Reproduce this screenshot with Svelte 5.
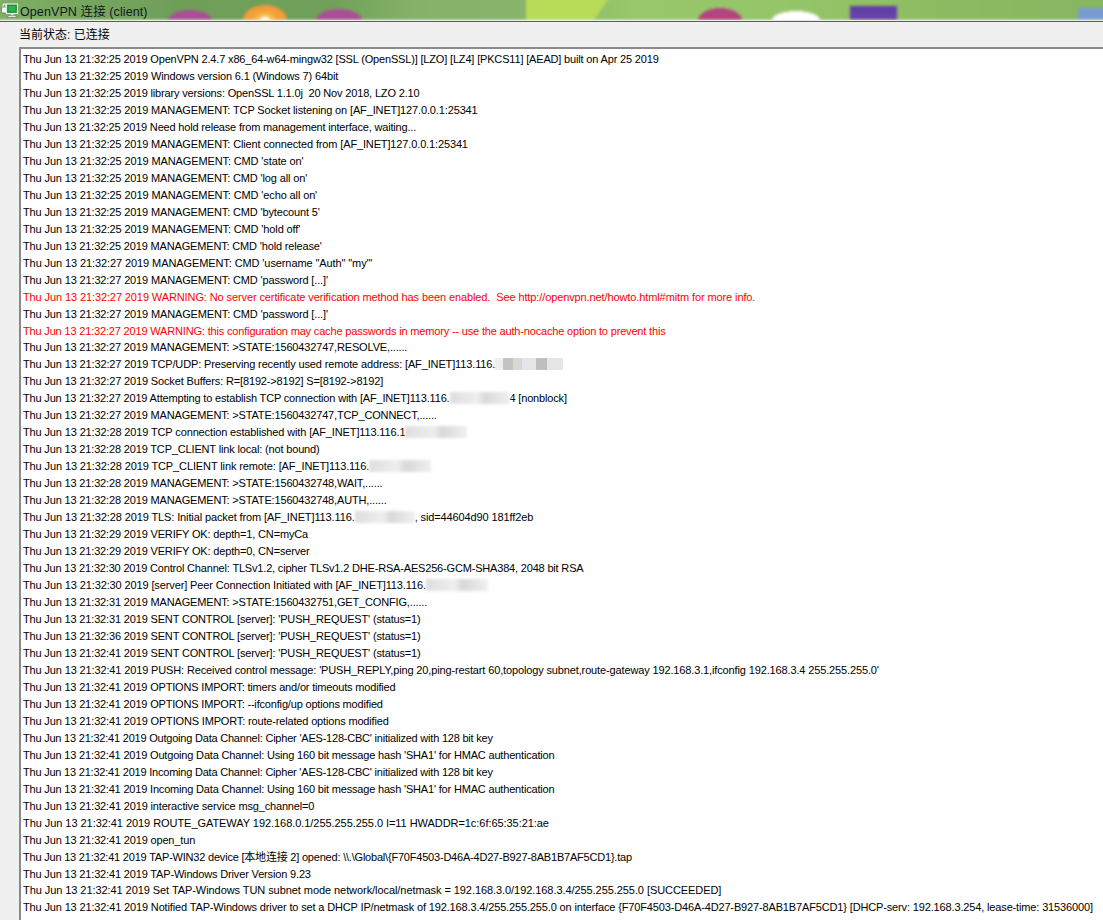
<script>
  const lines = [
    { t: "Thu Jun 13 21:32:25 2019 OpenVPN 2.4.7 x86_64-w64-mingw32 [SSL (OpenSSL)] [LZO] [LZ4] [PKCS11] [AEAD] built on Apr 25 2019", d: -1 },
    { t: "Thu Jun 13 21:32:25 2019 Windows version 6.1 (Windows 7) 64bit", d: 1 },
    { t: "Thu Jun 13 21:32:25 2019 library versions: OpenSSL 1.1.0j  20 Nov 2018, LZO 2.10" },
    { t: "Thu Jun 13 21:32:25 2019 MANAGEMENT: TCP Socket listening on [AF_INET]127.0.0.1:25341", d: 2 },
    { t: "Thu Jun 13 21:32:25 2019 Need hold release from management interface, waiting...", d: -2 },
    { t: "Thu Jun 13 21:32:25 2019 MANAGEMENT: Client connected from [AF_INET]127.0.0.1:25341", d: 2 },
    { t: "Thu Jun 13 21:32:25 2019 MANAGEMENT: CMD 'state on'", d: 2 },
    { t: "Thu Jun 13 21:32:25 2019 MANAGEMENT: CMD 'log all on'", d: 1 },
    { t: "Thu Jun 13 21:32:25 2019 MANAGEMENT: CMD 'echo all on'", d: 2 },
    { t: "Thu Jun 13 21:32:25 2019 MANAGEMENT: CMD 'bytecount 5'", d: 1 },
    { t: "Thu Jun 13 21:32:25 2019 MANAGEMENT: CMD 'hold off'", d: 2 },
    { t: "Thu Jun 13 21:32:25 2019 MANAGEMENT: CMD 'hold release'" },
    { t: "Thu Jun 13 21:32:27 2019 MANAGEMENT: CMD 'username \"Auth\" \"my\"'", d: 4 },
    { t: "Thu Jun 13 21:32:27 2019 MANAGEMENT: CMD 'password [...]'", d: 1 },
    { t: "Thu Jun 13 21:32:27 2019 WARNING: No server certificate verification method has been enabled.  See http://openvpn.net/howto.html#mitm for more info.", red: true, d: 8 },
    { t: "Thu Jun 13 21:32:27 2019 MANAGEMENT: CMD 'password [...]'", d: 1 },
    { t: "Thu Jun 13 21:32:27 2019 WARNING: this configuration may cache passwords in memory -- use the auth-nocache option to prevent this", red: true, d: -1 },
    { t: "Thu Jun 13 21:32:27 2019 MANAGEMENT: >STATE:1560432747,RESOLVE,......" },
    { t: "Thu Jun 13 21:32:27 2019 TCP/UDP: Preserving recently used remote address: [AF_INET]113.116.", mask: 68, kind: "mosaic", d: 2 },
    { t: "Thu Jun 13 21:32:27 2019 Socket Buffers: R=[8192->8192] S=[8192->8192]", d: 1 },
    { t: "Thu Jun 13 21:32:27 2019 Attempting to establish TCP connection with [AF_INET]113.116.", mask: 60, kind: "smear", post: "4 [nonblock]", d: -1 },
    { t: "Thu Jun 13 21:32:27 2019 MANAGEMENT: >STATE:1560432747,TCP_CONNECT,......" },
    { t: "Thu Jun 13 21:32:28 2019 TCP connection established with [AF_INET]113.116.1", mask: 62, kind: "smear", d: 2 },
    { t: "Thu Jun 13 21:32:28 2019 TCP_CLIENT link local: (not bound)" },
    { t: "Thu Jun 13 21:32:28 2019 TCP_CLIENT link remote: [AF_INET]113.116.", mask: 62, kind: "smear", d: 3 },
    { t: "Thu Jun 13 21:32:28 2019 MANAGEMENT: >STATE:1560432748,WAIT,......" },
    { t: "Thu Jun 13 21:32:28 2019 MANAGEMENT: >STATE:1560432748,AUTH,......" },
    { t: "Thu Jun 13 21:32:28 2019 TLS: Initial packet from [AF_INET]113.116.", mask: 60, kind: "smear", post: ", sid=44604d90 181ff2eb", d: 3 },
    { t: "Thu Jun 13 21:32:29 2019 VERIFY OK: depth=1, CN=myCa" },
    { t: "Thu Jun 13 21:32:29 2019 VERIFY OK: depth=0, CN=server" },
    { t: "Thu Jun 13 21:32:30 2019 Control Channel: TLSv1.2, cipher TLSv1.2 DHE-RSA-AES256-GCM-SHA384, 2048 bit RSA", d: -2 },
    { t: "Thu Jun 13 21:32:30 2019 [server] Peer Connection Initiated with [AF_INET]113.116.", mask: 62, kind: "smear", d: 3 },
    { t: "Thu Jun 13 21:32:31 2019 MANAGEMENT: >STATE:1560432751,GET_CONFIG,......" },
    { t: "Thu Jun 13 21:32:31 2019 SENT CONTROL [server]: 'PUSH_REQUEST' (status=1)" },
    { t: "Thu Jun 13 21:32:36 2019 SENT CONTROL [server]: 'PUSH_REQUEST' (status=1)" },
    { t: "Thu Jun 13 21:32:41 2019 SENT CONTROL [server]: 'PUSH_REQUEST' (status=1)" },
    { t: "Thu Jun 13 21:32:41 2019 PUSH: Received control message: 'PUSH_REPLY,ping 20,ping-restart 60,topology subnet,route-gateway 192.168.3.1,ifconfig 192.168.3.4 255.255.255.0'", d: 4 },
    { t: "Thu Jun 13 21:32:41 2019 OPTIONS IMPORT: timers and/or timeouts modified", d: -1 },
    { t: "Thu Jun 13 21:32:41 2019 OPTIONS IMPORT: --ifconfig/up options modified", d: -1 },
    { t: "Thu Jun 13 21:32:41 2019 OPTIONS IMPORT: route-related options modified" },
    { t: "Thu Jun 13 21:32:41 2019 Outgoing Data Channel: Cipher 'AES-128-CBC' initialized with 128 bit key", d: -5 },
    { t: "Thu Jun 13 21:32:41 2019 Outgoing Data Channel: Using 160 bit message hash 'SHA1' for HMAC authentication", d: -2 },
    { t: "Thu Jun 13 21:32:41 2019 Incoming Data Channel: Cipher 'AES-128-CBC' initialized with 128 bit key", d: -5 },
    { t: "Thu Jun 13 21:32:41 2019 Incoming Data Channel: Using 160 bit message hash 'SHA1' for HMAC authentication", d: -2 },
    { t: "Thu Jun 13 21:32:41 2019 interactive service msg_channel=0" },
    { t: "Thu Jun 13 21:32:41 2019 ROUTE_GATEWAY 192.168.0.1/255.255.255.0 I=11 HWADDR=1c:6f:65:35:21:ae", d: 10 },
    { t: "Thu Jun 13 21:32:41 2019 open_tun" },
    { t: "Thu Jun 13 21:32:41 2019 TAP-WIN32 device [本地连接 2] opened: \\\\.\\Global\\{F70F4503-D46A-4D27-B927-8AB1B7AF5CD1}.tap", d: -5 },
    { t: "Thu Jun 13 21:32:41 2019 TAP-Windows Driver Version 9.23" },
    { t: "Thu Jun 13 21:32:41 2019 Set TAP-Windows TUN subnet mode network/local/netmask = 192.168.3.0/192.168.3.4/255.255.255.0 [SUCCEEDED]", d: 12 },
    { t: "Thu Jun 13 21:32:41 2019 Notified TAP-Windows driver to set a DHCP IP/netmask of 192.168.3.4/255.255.255.0 on interface {F70F4503-D46A-4D27-B927-8AB1B7AF5CD1} [DHCP-serv: 192.168.3.254, lease-time: 31536000]", d: 3 }
  ];

  const spacing = (line) => (-0.16 + (line.d ?? 0) / line.t.length).toFixed(3);
</script>

<div class="window">
  <header class="titlebar">
    <svg class="icon" width="18" height="17" viewBox="0 0 18 17" aria-hidden="true">
      <rect x="0.5" y="5" width="6" height="6" rx="1" fill="#f4f4f4" stroke="#555" stroke-width="0.6" />
      <path d="M2 5V3.4a1.5 1.5 0 0 1 3 0V5" fill="none" stroke="#eee" stroke-width="1.2" />
      <rect x="5.5" y="2" width="11" height="9.5" fill="#1f8f3a" stroke="#e4ece4" stroke-width="1.2" />
      <rect x="7.5" y="4" width="7" height="5.5" fill="#2fb14f" />
      <rect x="10" y="11.5" width="2.5" height="2" fill="#e6e6e6" />
      <rect x="7" y="13.5" width="8" height="1.6" fill="#f2f2f2" stroke="#555" stroke-width="0.4" />
    </svg>
    <span class="title">OpenVPN 连接 (client)</span>
  </header>

  <main class="body">
    <div class="status">当前状态: 已连接</div>
    <div class="log">
      {#each lines as line}
        <div class="line" class:red={line.red} style="letter-spacing:{spacing(line)}px">{line.t}{#if line.mask}<span class="mask {line.kind}" style="width:{line.mask}px"></span>{/if}{#if line.post}{line.post}{/if}</div>
      {/each}
    </div>
  </main>
</div>

<style>
  :global(body) {
    margin: 0;
    background: #f0f0f0;
  }
  .window {
    width: 1103px;
    height: 920px;
    overflow: hidden;
    display: flex;
    flex-direction: column;
    font-family: "Liberation Sans", "Noto Sans CJK SC", sans-serif;
    font-size: 11px;
    color: #000;
  }
  .titlebar {
    flex: none;
    position: relative;
    overflow: hidden;
    height: 20px;
    display: flex;
    align-items: center;
    gap: 1px;
    padding-left: 1px;
    border-bottom: 1px solid #e6efdc;
    box-shadow: 0 1px 0 #5c5c5c;
  }
  .titlebar::before {
    content: "";
    position: absolute;
    inset: -4px -4px 0 -4px;
    filter: blur(1.5px);
    background-color: #84b268;
    background-image:
      radial-gradient(ellipse 22px 15px at 269px 24px, #fff 0 14%, #f6c04a 30%, #f2a03a 60%, #f09a38 98%, transparent 100%),
      radial-gradient(ellipse 22px 10px at 194px 24px, #a94f96 0 98%, transparent 100%),
      radial-gradient(ellipse 23px 11px at 343px 24px, #a94f96 0 98%, transparent 100%),
      radial-gradient(ellipse 22px 12px at 724px 24px, #b2447f 0 98%, transparent 100%),
      radial-gradient(ellipse 24px 9px at 800px 24px, #fff 0 98%, transparent 100%),
      linear-gradient(#5f3aa4, #6a48ae),
      linear-gradient(#7a9bd2, #7a9bd2),
      linear-gradient(125deg, #b8dc58 0 72%, transparent 73%),
      linear-gradient(90deg, #7fae64 0, #6e9e58 180px, #6f9f58 330px, #84b268 420px, #86b46a 528px, #98c86a 640px, #94c468 800px, #8cba62 960px, #86b660 1085px);
    background-size: 100% 100%, 100% 100%, 100% 100%, 100% 100%, 100% 100%, 47px 16px, 40px 15px, 100px 100%, 100% 100%;
    background-position: 0 0, 0 0, 0 0, 0 0, 0 0, 854px 10px, 1082px 12px, 530px 0, 0 0;
    background-repeat: no-repeat;
  }
  .icon {
    flex: none;
    position: relative;
  }
  .title {
    position: relative;
    font-size: 12.5px;
    letter-spacing: 0.1px;
    color: #101828;
  }
  .body {
    flex: 1;
    min-height: 0;
    margin-top: 1px;
    background: #f0f0f0;
    padding: 5px 0 0 19px;
    display: flex;
    flex-direction: column;
  }
  .status {
    height: 20px;
    line-height: 16px;
    font-size: 12px;
  }
  .log {
    flex: 1;
    background: #fff;
    border-top: 2px solid #8a8a8a;
    border-left: 2px solid #8a8a8a;
    padding: 2px 0 0 2px;
    overflow: hidden;
  }
  .line {
    height: 16.98px;
    line-height: 17px;
    white-space: pre;
    color: #000;
  }
  .red {
    color: #f00;
  }
  .mask {
    display: inline-block;
    height: 12px;
    vertical-align: -2px;
    filter: blur(1.5px);
    background: linear-gradient(90deg, #dedede, #eeeeee 45%, #d8d8d8 60%, #f0f0f0);
  }
  .mosaic {
    filter: blur(0.6px);
    background: linear-gradient(90deg, #eee 0 12%, #c4c4c4 12% 26%, #d8d8d0 26% 40%, #e6e6ea 40% 60%, #bebebe 60% 76%, #e6e6e6 76% 100%);
  }
</style>
